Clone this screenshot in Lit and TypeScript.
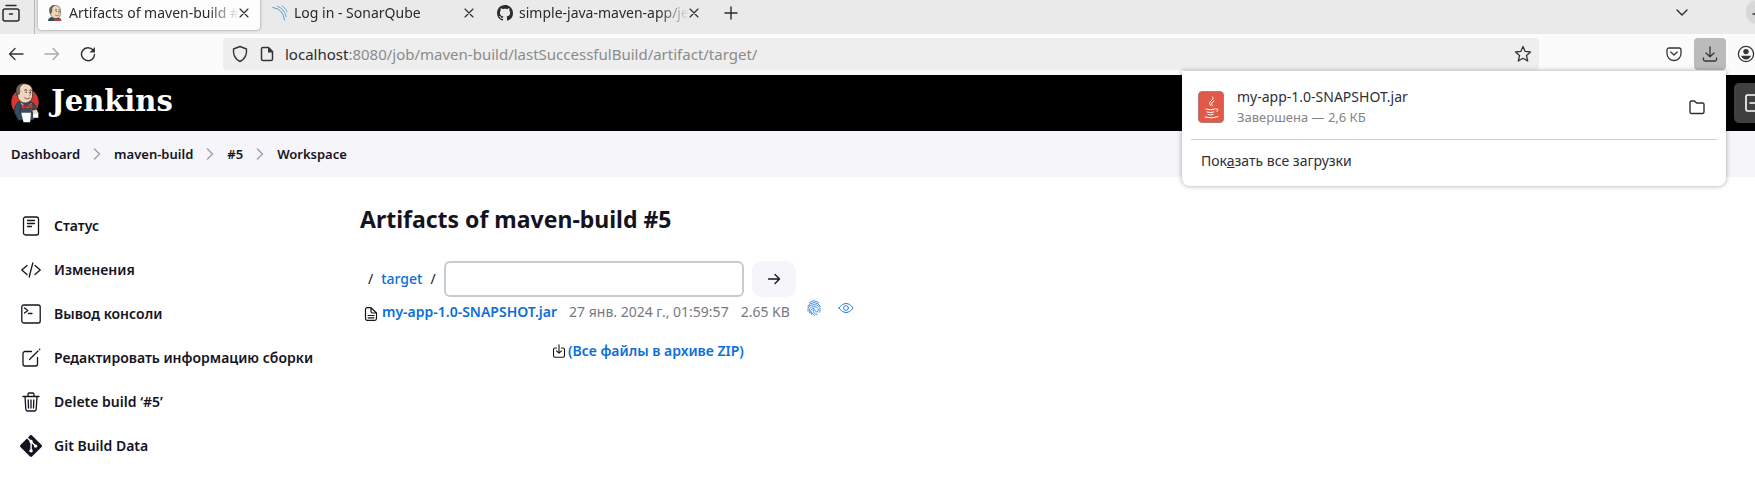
import { LitElement, html, css, svg, nothing } from "lit";
import { customElement, state } from "lit/decorators.js";
import { classMap } from "lit/directives/class-map.js";

const line = (size: number, box: number, width: number, body: unknown) => html`
  <svg class="icon" width=${size} height=${size} viewBox="0 0 ${box} ${box}" fill="none"
    stroke="currentColor" stroke-width=${width} stroke-linecap="round" stroke-linejoin="round" aria-hidden="true">${body}</svg>`;
const solid = (size: number, box: number, body: unknown) => html`
  <svg class="icon" width=${size} height=${size} viewBox="0 0 ${box} ${box}" fill="currentColor" aria-hidden="true">${body}</svg>`;

const butlerHead = svg`
  <path d="M9 13C7 5 13 0 19 1c8 0 12 5 11 13 1 6-2 12-9 13-8 0-11-6-12-14Z" fill="#f0d6b7" stroke="#332c29" stroke-width="1"/>
  <path d="M9 16C6 6 11 1 18 1c-5 3-6 6-5 10l-1 5c-1-2-3-2-2 2Z" fill="#6f665f" stroke="#332c29" stroke-width=".7"/>
  <path d="M19 10q2-2 4 0M26 10q2-1 3 0" stroke="#332c29" stroke-width="1.3" fill="none"/>
  <circle cx="21.500" cy="12.500" r="1" fill="#332c29"/><circle cx="27.500" cy="12.500" r="1" fill="#332c29"/>
  <path d="M25 12q4 4 1 5M19 20q4 3 8 0" stroke="#8c5a49" stroke-width="1.300" fill="none"/>`;

const icons = {
  view: line(20, 20, 1.5, svg`<path d="M5 2.500h10M4 6h12a2 2 0 0 1 2 2v8a2 2 0 0 1-2 2H4a2 2 0 0 1-2-2V8a2 2 0 0 1 2-2ZM8.500 11h3"/>`),
  close: line(10, 10, 1.1, svg`<path d="m1 1 8 8M9 1 1 9"/>`),
  plus: line(14, 14, 1.4, svg`<path d="M7 1v12M1 7h12"/>`),
  down: line(14, 14, 1.4, svg`<path d="m2 4 5 5 5-5"/>`),
  minus: line(10, 10, 1.4, svg`<path d="M1 7h8"/>`),
  back: line(16, 16, 1.4, svg`<path d="M15 8H1.500M7 2.500 1.500 8 7 13.500"/>`),
  forward: line(16, 16, 1.4, svg`<path d="M1 8h13.500M9 2.500 14.500 8 9 13.500"/>`),
  reload: html`<svg class="icon" width="16" height="16" viewBox="0 0 16 16" aria-hidden="true"><path d="M13 4a6.500 6.500 0 1 0 1.500 4.500" fill="none" stroke="currentColor" stroke-width="1.500" stroke-linecap="round"/><path d="M15 1v5.500H9.500Z" fill="currentColor"/></svg>`,
  shield: line(18, 18, 1.4, svg`<path d="M9 1.500 15.500 4c.6 6-1.500 10-6.500 12.500C4 14 1.900 10 2.500 4Z"/>`),
  page: html`<svg class="icon" width="16" height="16" viewBox="0 0 16 16" aria-hidden="true"><path d="M4 1.500h5.500l4 4V13a1.500 1.500 0 0 1-1.500 1.500H4A1.500 1.500 0 0 1 2.500 13V3A1.500 1.500 0 0 1 4 1.500Z" fill="none" stroke="currentColor" stroke-width="1.500"/><path d="M9 1v5.500h5Z" fill="currentColor"/></svg>`,
  star: line(18, 18, 1.3, svg`<path d="m9 1.500 2.200 4.900 5.300.6-4 3.600 1.200 5.400L9 13.300 4.300 16l1.200-5.400-4-3.600 5.300-.6Z"/>`),
  pocket: line(16, 16, 1.3, svg`<path d="M3 2h10a2 2 0 0 1 2 2v3.500a7 7 0 0 1-14 0V4a2 2 0 0 1 2-2Z"/><path d="m4.800 6 3.200 3 3.200-3"/>`),
  download: line(16, 16, 1.3, svg`<path d="M8 .8v9.700M4 7l4 3.800L12 7M1.500 12v1.500q0 1.500 1.500 1.500h10q1.500 0 1.500-1.500V12"/>`),
  account: html`<svg class="icon" width="18" height="18" viewBox="0 0 18 18" aria-hidden="true"><circle cx="9" cy="9" r="7.600" fill="none" stroke="currentColor" stroke-width="1.300"/><circle cx="9" cy="6.600" r="2.700" fill="currentColor"/><path d="M4 10.800h10q-1.500 3.700-5 3.700t-5-3.700Z" fill="currentColor"/></svg>`,
  folder: line(18, 18, 1.4, svg`<path d="M2 4.500A1.500 1.500 0 0 1 3.500 3h3l2 2H14.500A1.500 1.500 0 0 1 16 6.500V14a1.500 1.500 0 0 1-1.500 1.500h-11A1.500 1.500 0 0 1 2 14Z"/>`),
  chevron: line(12, 12, 1.5, svg`<path d="m3.500 1 5 5-5 5"/>`),
  exit: line(20, 20, 1.6, svg`<path d="M13 5V3.500Q13 2 11.500 2h-8Q2 2 2 3.500v13Q2 18 3.500 18h8q1.500 0 1.500-1.500V15M6 10h13"/>`),
  status: line(20, 20, 1.3, svg`<rect x="2.500" y="1" width="15" height="18" rx="2"/><path d="M6.500 4.500h7M6.500 7.500h7M6.500 10.500h4"/>`),
  changes: line(20, 20, 1.3, svg`<path d="M6 5.500.8 10 6 14.500M14 5.500l5.200 4.500-5.200 4.500M11.800 3 8.200 17"/>`),
  console: line(20, 20, 1.3, svg`<rect x=".8" y="1" width="18.400" height="18" rx="2"/><path d="m3.500 4 3.300 2.500L3.500 9M7.500 9.500H11"/>`),
  edit: line(20, 20, 1.3, svg`<path d="M10.500 3.500H4a2 2 0 0 0-2 2V16a2 2 0 0 0 2 2h10.500a2 2 0 0 0 2-2V9.500M8.500 11.500 17 3M18.500 1.500l.3-.3"/>`),
  trash: line(20, 20, 1.3, svg`<path d="M2 4.500h16M4 4.500l.8 12.800q.1 1.700 1.700 1.700h7q1.600 0 1.700-1.700L16 4.500M7 4.500V2.200Q7 1 8.200 1h3.600Q13 1 13 2.200v2.300M7.200 8l.3 8M10 8v8M12.800 8l-.3 8"/>`),
  git: solid(22, 24, svg`<path d="M23.546 10.930 13.067.452c-.604-.603-1.582-.603-2.188 0L8.708 2.627l2.760 2.760c.645-.215 1.379-.07 1.889.441.516.515.658 1.258.438 1.900l2.658 2.660c.645-.223 1.387-.078 1.900.435.721.720.721 1.884 0 2.604-.719.719-1.881.719-2.600 0-.539-.541-.674-1.337-.404-1.996L12.860 8.955v6.525c.176.086.342.203.488.348.713.721.713 1.883 0 2.600-.719.721-1.889.721-2.609 0-.719-.719-.719-1.879 0-2.598.182-.180.387-.316.605-.406V8.835c-.217-.091-.424-.222-.600-.401-.545-.545-.676-1.342-.396-2.009L7.636 3.700.450 10.881c-.600.605-.600 1.584 0 2.189l10.480 10.477c.604.604 1.582.604 2.186 0l10.430-10.430c.605-.603.605-1.582 0-2.187"/>`),
  arrow: line(14, 14, 1.3, svg`<path d="M1.500 7h11M8 2.500 12.500 7 8 11.500"/>`),
  document: line(14, 14, 1.2, svg`<path d="M3.500.7H7L12.500 6v5.500q0 1.800-1.800 1.800H3.300q-1.800 0-1.800-1.800V2.500Q1.500.7 3.500.7ZM7 1v3.500Q7 6 8.500 6h4M4 8.500h6M4 10.800h6"/>`),
  archive: line(14, 14, 1.1, svg`<path d="M4.500 4H3Q1.500 4 1.500 5.500v6Q1.500 13.300 3 13.300h8q1.500 0 1.500-1.800v-6Q12.500 4 11 4H9.500M7 .7V9M4.500 6.800 7 9.200l2.500-2.400"/>`),
  print: line(16, 16, 0.9, svg`<path d="M3.500 2.500q4.500-3.500 9 0M1.800 6.500q1.200-3.700 6.200-3.900 5 .2 6.200 3.900M1.900 11Q1.200 4.900 8 4.700q6 .2 6.200 5.200 0 1.700-.8 2.600M3.600 13Q1.800 6.900 8 6.700q4.200.1 4.300 3.400 0 2.200-1.900 1.800Q9.200 11.500 9 10.200 8 9 7.200 10.200q-.3 3.300 4 4.300M5.500 14.500Q2.700 8.800 8 8.500M8.500 15.500Q6.500 14.500 5.800 12.500"/>`),
  eye: line(16, 16, 1, svg`<path d="M.8 8Q4 3.300 8 3.300T15.200 8Q12 12.700 8 12.700T.8 8Z"/><circle cx="8" cy="8" r="2.400"/>`),
  butler: html`<svg class="icon" width="16" height="16" viewBox="3 0 32 32" aria-hidden="true"><path d="M5 32q0-7 8-8l10 1q8 0 9 7Z" fill="#335061"/>${butlerHead}<path d="m18 27 6 2 6-3v6H18Z" fill="#d33833"/></svg>`,
  sonar: html`<svg class="icon" width="16" height="16" viewBox="0 0 16 16" fill="none" stroke="#4b9fd5" stroke-linecap="round" aria-hidden="true"><path d="M.8 2.500Q11 3.500 12.500 15" stroke-width="1"/><path d="M5.500 1.200Q12.500 4 14.200 11.500" stroke-width=".9"/><path d="M10 .8q3.700 2 5.200 6" stroke-width=".8"/></svg>`,
  github: solid(16, 16, svg`<path d="M8 0C3.580 0 0 3.580 0 8c0 3.540 2.290 6.530 5.470 7.590.4.070.55-.17.55-.38 0-.19-.01-.82-.01-1.490-2.010.37-2.530-.49-2.690-.94-.09-.23-.48-.94-.82-1.130-.28-.15-.68-.52-.01-.53.63-.01 1.080.58 1.230.82.72 1.210 1.870.87 2.330.66.07-.52.28-.87.51-1.070-1.780-.2-3.640-.89-3.640-3.950 0-.87.31-1.590.82-2.150-.08-.2-.36-1.020.08-2.120 0 0 .67-.21 2.200.82.64-.18 1.320-.27 2-.27s1.360.09 2 .27c1.530-1.040 2.200-.82 2.200-.82.44 1.100.16 1.920.08 2.120.51.56.82 1.270.82 2.150 0 3.070-1.870 3.750-3.650 3.950.29.25.54.73.54 1.480 0 1.070-.01 1.930-.01 2.200 0 .21.15.46.55.38A8.010 8.010 0 0 0 16 8c0-4.420-3.580-8-8-8Z"/>`),
  jenkins: html`<svg class="icon" width="30" height="40" viewBox="0 0 40 54" aria-hidden="true">
    <circle cx="20" cy="26" r="18.500" fill="#d33833"/>
    <path d="M6 40q-1-12 8-16l15 2q7 3 7 15l-5 9H11Z" fill="#335061" stroke="#1d2b35"/>
    <path d="m15 26 6 7 8-6 2 9H16Z" fill="#fff"/><path d="m13 26 5 16h-6ZM31 27l-3 15h5Z" fill="#264252"/>
    ${butlerHead}
    <path d="M15 33h14v8H14Z" fill="#335061"/>
    <path d="m15 29 7 3 7-4 1 7-7-3-7 4Z" fill="#d33833" stroke="#811" stroke-width=".8"/>
    <path d="M15 40h13l-1 13H18Z" fill="#fff"/><path d="M31 40h7v7h-7Z" fill="#fff"/><path d="M30 37l6-1 2 5-7 1Z" fill="#f0d6b7"/>
  </svg>`,
  jar: html`<svg class="icon" width="26" height="32" viewBox="0 0 26 32" fill="none" aria-hidden="true">
    <rect x=".5" y=".5" width="25" height="31" rx="3.500" fill="#e05a47" stroke="#b77"/>
    <g stroke="#fff" stroke-width="1" stroke-linecap="round"><path d="M15 6q1 2-2 4t0 5M16 10q-4 2-1.500 4.500M8 18q5 1.800 9 0M9 21q4 1.300 7 0M10 23.500q3 1 5 0M7 26q6 2 13-.3M18 18q3.500-.3 1 2.500"/></g></svg>`,
};

const tabs = [
  { title: "Artifacts of maven-build #", icon: icons.butler },
  { title: "Log in - SonarQube", icon: icons.sonar },
  { title: "simple-java-maven-app/je", icon: icons.github },
];
const crumbs = ["Dashboard", "maven-build", "#5", "Workspace"];
const tasks = [
  { label: "Статус", icon: icons.status },
  { label: "Изменения", icon: icons.changes },
  { label: "Вывод консоли", icon: icons.console },
  { label: "Редактировать информацию сборки", icon: icons.edit },
  { label: "Delete build ‘#5’", icon: icons.trash },
  { label: "Git Build Data", icon: icons.git },
];

@customElement("app-root")
export class AppRoot extends LitElement {
  @state() private active = 0;
  @state() private downloadsOpen = true;

  static styles = css`
    :host { display: block; position: relative; overflow: hidden; min-height: 100vh; background: #fff; color: #14141f; font: 14px/20px "Noto Sans", "Open Sans", sans-serif; }
    * { box-sizing: border-box; }
    button { font: inherit; color: inherit; border: 0; background: none; padding: 0; display: flex; align-items: center; justify-content: center; flex: none; }
    a { color: inherit; text-decoration: none; }
    .icon { display: block; flex: none; }
    .strip { display: flex; height: 34px; padding-bottom: 9px; background: #eaeaea; color: #2b2b2f; }
    .view { width: 35px; height: 34px; padding: 0 13px 8px 0; border-right: 1px solid #b8b8b8; }
    .tabs { display: flex; gap: 3px; padding-left: 3px; }
    .tab { display: flex; align-items: center; width: 222px; height: 30px; padding: 0 11px 5px 9px; }
    .tab.active { background: #fdfdfd; border-radius: 0 0 4px 4px; box-shadow: 0 0 3px #888; }
    .tab-title { flex: 1; min-width: 0; gap: 6px; justify-content: flex-start; white-space: nowrap; overflow: hidden; mask-image: linear-gradient(to right, #000 84%, transparent); }
    .new { margin-left: 14px; }
    .list { margin-left: auto; margin-right: 57px; }
    .minimize { width: 22px; height: 24px; margin-right: -13px; border-radius: 12px; background: #d8d8d8; }
    .toolbar { display: flex; align-items: center; height: 41px; background: #fbfbfb; color: #35353a; padding: 0 0 1px 8px; }
    .nav { display: flex; gap: 20px; width: 215px; }
    .dim { color: #aaa; }
    .url { flex: 1; display: flex; align-items: center; gap: 10px; height: 32px; padding: 0 7px 0 8px; background: #eee; border-radius: 4px; }
    .address { flex: 1; white-space: nowrap; color: #8b8b8b; font-size: 15px; }
    .host { color: #2b2b2f; }
    .tools { display: flex; align-items: center; justify-content: flex-end; width: 216px; }
    .tools .save { width: 32px; height: 32px; margin: 0 11px 0 12px; border-radius: 4px; background: #bbb; }
    .header { display: flex; align-items: center; justify-content: space-between; height: 56px; padding-left: 10px; background: #000; color: #fff; }
    .brand { display: flex; align-items: center; gap: 11px; font: bold 29px/36px "DejaVu Serif", serif; }
    .brand-name { padding-bottom: 4px; }
    .logout { width: 40px; height: 40px; margin-right: -19px; border-radius: 5px; background: #404040; }
    .crumbs { display: flex; align-items: center; gap: 11px; height: 46px; padding: 0 11px; background: #f5f5fa; font-size: 13px; font-weight: 600; }
    .crumbs .icon { color: #a0a0aa; }
    .body { display: grid; grid-template-columns: 360px 1fr; }
    .tasks { display: flex; flex-direction: column; gap: 24px; padding: 39px 0 0 20px; font-weight: 600; }
    .task { display: flex; align-items: center; gap: 12px; height: 20px; white-space: nowrap; }
    .task-icon { display: flex; justify-content: center; width: 22px; }
    .content { padding-top: 24px; }
    h1 { margin: 0 0 24px; font-size: 23px; line-height: 36px; font-weight: 700; }
    .path { display: flex; align-items: center; gap: 8px; padding-left: 8px; }
    .link { color: #0b6ed8; font-weight: 600; }
    .path .link { font-weight: 500; }
    .pattern { width: 300px; height: 36px; border: 2px solid #c3ccd1; border-radius: 6px; padding: 0 10px; background: #fff; font: inherit; }
    .go { width: 44px; height: 36px; border-radius: 10px; background: #f5f5fa; }
    table { border-collapse: collapse; }
    td { padding: 2px 12px 0 0; white-space: nowrap; color: #787882; height: 27px; }
    td.symbol { padding: 6px 4px 0 4px; color: #14141f; }
    td.size { padding-right: 16px; }
    td.action { padding: 0 16px 5px 0; color: #2f82dc; }
    .zip { display: inline-flex; align-items: center; gap: 2px; padding: 17px 0 0 192px; }
    .popup { position: absolute; top: 71px; right: 29px; width: 544px; padding: 14px 9px; border-radius: 0 0 8px 8px; background: #fff; color: #2f2f35; box-shadow: 0 0 5px rgba(0, 0, 0, 0.35); }
    .item { display: flex; align-items: center; gap: 13px; padding: 2px 11px 12px 7px; border-bottom: 1px solid #ccc; }
    .info { flex: 1; }
    .sub { color: #858585; font-size: 13px; }
    .all { padding: 11px 10px 1px; }
  `;

  render() {
    return html`
      <div class="strip">
        <button class="view" aria-label="View">${icons.view}</button>
        <div class="tabs">
          ${tabs.map((t, i) => html`
            <div class=${classMap({ tab: true, active: i === this.active })}>
              <button class="tab-title" @click=${() => (this.active = i)}>${t.icon}<span>${t.title}</span></button>
              <button aria-label="Close">${icons.close}</button>
            </div>`)}
        </div>
        <button class="new" aria-label="New tab">${icons.plus}</button>
        <button class="list" aria-label="Tabs">${icons.down}</button>
        <button class="minimize" aria-label="Minimize">${icons.minus}</button>
      </div>
      <div class="toolbar">
        <div class="nav">
          <button aria-label="Back">${icons.back}</button>
          <button class="dim" aria-label="Forward">${icons.forward}</button>
          <button aria-label="Reload">${icons.reload}</button>
        </div>
        <div class="url">
          ${icons.shield}${icons.page}
          <span class="address"><span class="host">localhost</span>:8080/job/maven-build/lastSuccessfulBuild/artifact/target/</span>
          <button aria-label="Bookmark">${icons.star}</button>
        </div>
        <div class="tools">
          <button aria-label="Pocket">${icons.pocket}</button>
          <button class="save" aria-label="Downloads" @click=${() => (this.downloadsOpen = !this.downloadsOpen)}>${icons.download}</button>
          <button aria-label="Account">${icons.account}</button>
        </div>
      </div>
      <header class="header">
        <a class="brand" href="#">${icons.jenkins}<span class="brand-name">Jenkins</span></a>
        <button class="logout" aria-label="Log out">${icons.exit}</button>
      </header>
      <nav class="crumbs">
        ${crumbs.map((c, i) => html`${i ? icons.chevron : nothing}<a href="#">${c}</a>`)}
      </nav>
      <div class="body">
        <nav class="tasks">
          ${tasks.map((t) => html`<a class="task" href="#"><span class="task-icon">${t.icon}</span>${t.label}</a>`)}
        </nav>
        <main class="content">
          <h1>Artifacts of maven-build #5</h1>
          <form class="path" @submit=${(e: Event) => e.preventDefault()}>
            <span>/</span><a class="link" href="#">target</a><span>/</span>
            <input class="pattern" type="text" aria-label="Pattern">
            <button class="go" aria-label="Go">${icons.arrow}</button>
          </form>
          <table>
            <tr>
              <td class="symbol">${icons.document}</td>
              <td><a class="link" href="#">my-app-1.0-SNAPSHOT.jar</a></td>
              <td>27 янв. 2024 г., 01:59:57</td>
              <td class="size">2.65 KB</td>
              <td class="action"><a href="#" aria-label="Fingerprint">${icons.print}</a></td>
              <td class="action"><a href="#" aria-label="View file">${icons.eye}</a></td>
            </tr>
          </table>
          <a class="zip" href="#">${icons.archive}<span class="link">(Все файлы в архиве ZIP)</span></a>
        </main>
      </div>
      ${this.downloadsOpen ? html`
        <section class="popup">
          <div class="item">
            ${icons.jar}
            <div class="info"><div>my-app-1.0-SNAPSHOT.jar</div><div class="sub">Завершена — 2,6 КБ</div></div>
            <button aria-label="Open folder">${icons.folder}</button>
          </div>
          <button class="all"><span>Пок<u>а</u>зать все загрузки</span></button>
        </section>` : nothing}
    `;
  }
}
